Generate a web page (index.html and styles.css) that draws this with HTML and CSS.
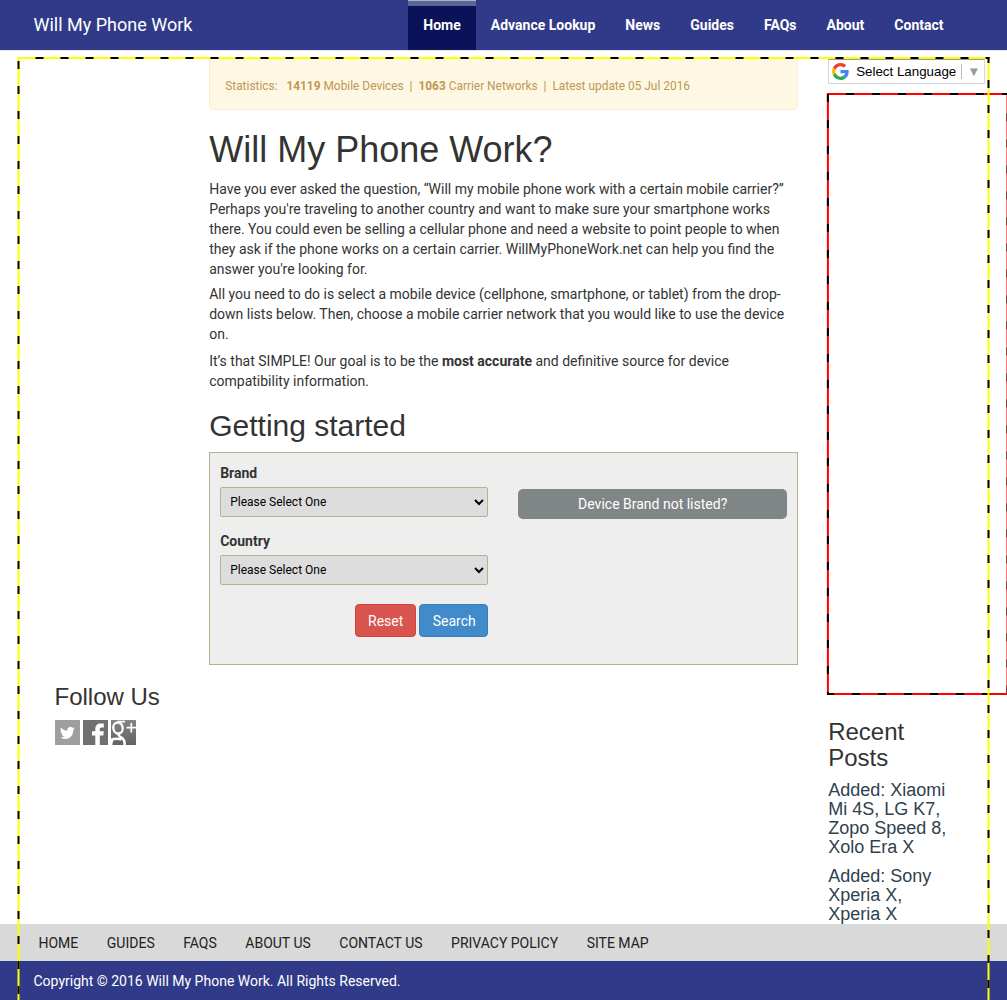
FILE: index.html
```html
<!DOCTYPE html>
<html lang="en">
<head>
<meta charset="utf-8">
<title>Will My Phone Work?</title>
<link rel="stylesheet" href="styles.css">
</head>
<body>
<header class="navbar">
  <a class="brand">Will My Phone Work</a>
  <nav class="nav">
    <a class="active">Home</a><a>Advance Lookup</a><a>News</a><a>Guides</a><a>FAQs</a><a>About</a><a>Contact</a>
  </nav>
</header>

<div class="page">
  <aside class="left">
    <h3>Follow Us</h3>
    <div class="social">
      <svg width="25" height="25" viewBox="0 0 25 25"><rect width="25" height="25" fill="#9e9e9e"/><path fill="#fff" d="M19.8 8.2c-.5.3-1 .4-1.600.5.6-.4 1-.9 1.200-1.500-.6.300-1.200.500-1.800.6a3.100 3.100 0 0 0-5.300 2.800c-2.600-.1-4.800-1.300-6.400-3.200-.8 1.500-.3 3.200 1 4.100-.5 0-1-.2-1.400-.4 0 1.600 1.100 2.800 2.500 3.100-.5.1-.9.100-1.400 0 .4 1.200 1.500 2.100 2.900 2.100-1.200 1-2.800 1.400-4.500 1.300 5.800 3.500 13.400.3 13.200-7.700.6-.5 1.200-1 1.600-1.700z"/></svg>
      <svg width="25" height="25" viewBox="0 0 25 25"><rect width="25" height="25" fill="#707070"/><path fill="#fff" d="M12.300 25V15.500H9V11.200h3.300V9c0-3.700 2-5.600 5.400-5.600h3.100v4h-2.200c-1.400 0-1.800.7-1.800 1.900v1.900h4l-.5 4.300h-3.500V25z"/></svg>
      <svg width="25" height="25" viewBox="0 0 25 25"><defs><linearGradient id="gp" x2="0" y2="1"><stop stop-color="#858585"/><stop offset="1" stop-color="#626262"/></linearGradient></defs><rect width="25" height="25" fill="url(#gp)"/><g fill="none" stroke="#fff"><ellipse cx="7" cy="8" rx="4.700" ry="5.500" stroke-width="2.300" transform="rotate(-12 7 8)"/><path stroke-width="1.700" d="M6.500 1.700H14M15.500 7.600h9.500M20.300 3v9.500"/><path stroke-width="2.500" d="M8.500 13.600c-1.800 1.600 0 2.700 2.200 4.200 2.500 1.900 3.500 3.700 2.700 7.200M0 20c3-1.800 7-1.500 10.500-.8M1.600 20c-1.300 1.500-1.500 3.500-1 5"/></g></svg>
    </div>
  </aside>

  <main class="main">
    <div class="stats">Statistics: &nbsp; <b>14119</b> Mobile Devices &nbsp;|&nbsp; <b>1063</b> Carrier Networks &nbsp;|&nbsp; Latest update 05 Jul 2016</div>
    <h1>Will My Phone Work?</h1>
    <p class="p1">Have you ever asked the question, “Will my mobile phone work with a certain mobile carrier?” Perhaps you're traveling to another country and want to make sure your smartphone works there. You could even be selling a cellular phone and need a website to point people to when they ask if the phone works on a certain carrier. WillMyPhoneWork.net can help you find the answer you're looking for.</p>
    <p class="p2">All you need to do is select a mobile device (cellphone, smartphone, or tablet) from the drop-down lists below. Then, choose a mobile carrier network that you would like to use the device on.</p>
    <p class="p3">It’s that SIMPLE! Our goal is to be the <b>most accurate</b> and definitive source for device compatibility information.</p>
    <h2>Getting started</h2>
    <form class="finder">
      <div class="fields">
        <label for="brand">Brand</label>
        <select id="brand"><option>Please Select One</option></select>
        <label for="country">Country</label>
        <select id="country"><option>Please Select One</option></select>
        <div class="actions">
          <button type="button" class="reset">Reset</button>
          <button type="button" class="search">Search</button>
        </div>
      </div>
      <div class="unlisted">Device Brand not listed?</div>
    </form>
  </main>

  <aside class="right">
    <div class="translate">
      <svg width="17" height="17" viewBox="0 0 48 48"><path fill="#ea4335" d="M24 9.500c3.540 0 6.710 1.220 9.210 3.600l6.850-6.850C35.900 2.380 30.470 0 24 0 14.620 0 6.510 5.380 2.560 13.220l7.980 6.190C12.430 13.720 17.740 9.500 24 9.500z"/><path fill="#4285f4" d="M46.980 24.550c0-1.570-.15-3.090-.38-4.550H24v9.020h12.940c-.58 2.960-2.260 5.480-4.780 7.180l7.730 6c4.510-4.180 7.090-10.360 7.090-17.650z"/><path fill="#fbbc05" d="M10.530 28.590c-.48-1.450-.76-2.990-.76-4.590s.27-3.140.76-4.590l-7.980-6.190C.92 16.460 0 20.120 0 24c0 3.880.92 7.540 2.560 10.780l7.970-6.190z"/><path fill="#34a853" d="M24 48c6.480 0 11.930-2.130 15.890-5.810l-7.730-6c-2.150 1.450-4.920 2.300-8.160 2.300-6.260 0-11.570-4.220-13.470-9.910l-7.980 6.190C6.510 42.620 14.620 48 24 48z"/></svg>
      <span class="lang">Select Language</span>
      <span class="caret">▼</span>
    </div>
    <div class="ad"></div>
    <h3>Recent Posts</h3>
    <h4>Added: Xiaomi Mi 4S, LG K7, Zopo Speed 8, Xolo Era X</h4>
    <h4>Added: Sony Xperia X, Xperia X</h4>
  </aside>
</div>

<footer class="footer">
  <nav class="links"><a>HOME</a><a>GUIDES</a><a>FAQS</a><a>ABOUT US</a><a>CONTACT US</a><a>PRIVACY POLICY</a><a>SITE MAP</a></nav>
  <div class="copy">Copyright © 2016 Will My Phone Work. All Rights Reserved.</div>
</footer>

<!-- dashed frames over the content area and the ad slot -->
<svg class="frames" width="1007" height="1000" viewBox="0 0 1007 1000" fill="none" stroke-width="2">
  <path stroke="red" d="M827 94H1007M827 694H1007M827.900 93V695M1007.500 95V693"/>
  <g stroke="#000" stroke-dasharray="8 18">
    <path d="M846 94H1007"/>
    <path d="M852 694H1007M827 694h7"/>
    <path d="M827.900 94V693"/>
    <path d="M1007.500 113.500V693"/>
  </g>
  <path stroke="#ff0" d="M17.500 58H989.500M18.500 57V1000M988.500 57V1000"/>
  <g stroke="#000" stroke-dasharray="8 17">
    <path d="M35.500 58H989.500"/>
    <path d="M18.500 61V1000"/>
    <path d="M988.500 57V1000" stroke-dashoffset="2"/>
  </g>
</svg>
</body>
</html>
```
FILE: styles.css
```css
* { box-sizing: border-box; }
html, body { height: 100%; }
body {
  margin: 0;
  height: 1000px;
  overflow: hidden;
  display: flex;
  flex-direction: column;
  background: #fff;
  color: #333;
  font: 14px/20px Roboto, sans-serif;
}
h1, h2, h3, h4 {
  margin: 0;
  font-family: "Liberation Sans", Arial, sans-serif;
  font-weight: 400;
  line-height: 1.1;
}
p { margin: 0; }

.navbar {
  flex: none;
  height: 51px;
  padding: 0 48.5px 0 33.5px;
  display: flex;
  justify-content: space-between;
  background: #303a88;
  border-bottom: 1px solid #e7e7e7;
  color: #fff;
}
.brand { font-size: 18px; line-height: 50px; }
.nav { display: flex; font-weight: 700; }
.nav a { padding: 0 15px; line-height: 50px; }
.nav .active {
  background: #0a1259;
  box-shadow: inset 0 1px #9fb3cf, inset 0 6px #5c6694;
}

.page {
  flex: 1;
  min-height: 0;
  overflow: hidden;
  display: grid;
  grid-template-columns: 124.7px 589px 1fr;
  column-gap: 30px;
  padding: 7px 0 0 54.5px;
}
.left { padding-top: 626px; }
.left h3 { font-size: 24px; }
.social { display: flex; gap: 3px; margin-top: 10px; padding-left: .5px; }

.stats {
  height: 52px;
  padding: 17px 15px 0;
  line-height: 20px;
  background: #fdf7e3;
  border: 1px solid #fbeed5;
  border-radius: 4px;
  color: #c09853;
  font-size: 11.9px;
}
.main h1 { font-size: 36px; margin-top: 20px; }
.p1 { margin-top: 9px; }
.p2 { margin-top: 5px; }
.p3 { margin-top: 7px; }
.main h2 { font-size: 30px; margin-top: 18px; }

.finder {
  display: grid;
  grid-template-columns: 268px 269px;
  column-gap: 30px;
  align-items: start;
  margin-top: 10px;
  height: 213px;
  padding: 10px;
  background: #eee;
  border: 1px solid #b9b08f;
}
.fields label { display: block; height: 24px; font-weight: 700; }
.fields select {
  display: block;
  width: 268px;
  height: 30px;
  margin-bottom: 14px;
  padding: 5px;
  background: #ddd;
  border: 1px solid #b9b08f;
  border-radius: 2px;
  color: #000;
  font: 12px Roboto, sans-serif;
}
.actions { display: flex; justify-content: flex-end; gap: 3px; padding-top: 5px; }
.actions button {
  height: 33px;
  padding: 1px 0 0;
  border: 1px solid;
  border-radius: 4px;
  color: #fff;
  font: 14px/20px Roboto, sans-serif;
}
.actions .reset { width: 61px; background: #d9534f; border-color: #d43f3a; }
.actions .search { width: 69px; padding-left: 1px; background: #428bca; border-color: #357ebd; }
.unlisted {
  margin-top: 26px;
  height: 30px;
  line-height: 30px;
  border-radius: 5px;
  background: #808685;
  color: #fff;
  text-align: center;
}

.translate {
  display: flex;
  align-items: center;
  width: 157px;
  height: 25px;
  margin-top: 1px;
  padding-left: 3px;
  border: 1px solid #d5d5d5;
  border-top-color: #9b9b9b;
  font: 13.33px "Liberation Sans", Arial, sans-serif;
  color: #000;
}
.translate svg { flex: none; }
.lang { margin-left: 7px; white-space: nowrap; }
.caret {
  margin-left: 5px;
  padding-left: 5px;
  border-left: 1px solid #bbb;
  line-height: 15px;
  color: #9b9b9b;
}
.ad { height: 602px; margin-top: 9px; }
.right h3 { width: 130px; margin-top: 24px; font-size: 24px; }
.right h4 {
  width: 130px;
  margin-top: 10px;
  font-size: 18px;
  line-height: 19px;
  color: #2f424d;
}
.right h3 + h4 { margin-top: 9px; }

.footer { flex: none; height: 76px; }
.links {
  display: flex;
  gap: 28.5px;
  height: 37px;
  padding-left: 38.5px;
  line-height: 38px;
  background: #d9d9d9;
  color: #222;
}
.copy {
  height: 39px;
  padding-left: 33.5px;
  line-height: 40px;
  background: #303a88;
  color: #fff;
}
.frames { position: absolute; top: 0; left: 0; pointer-events: none; }
```
